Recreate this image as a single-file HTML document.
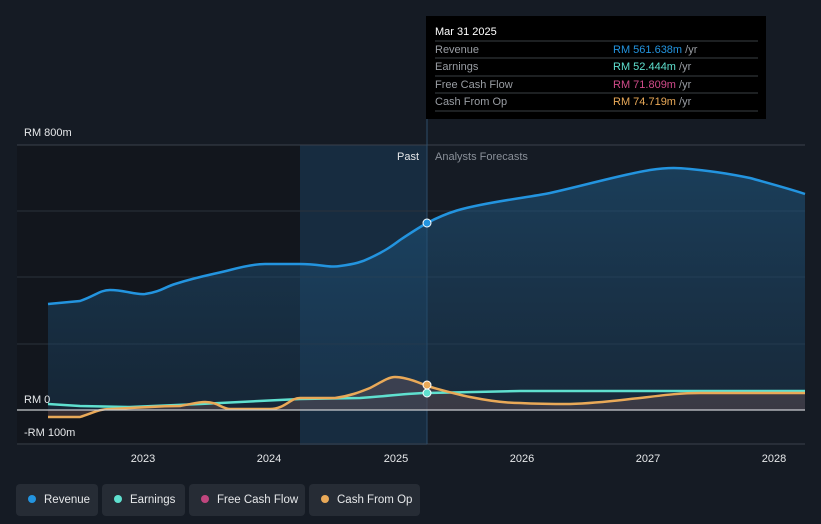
<!DOCTYPE html>
<html><head><meta charset="utf-8"><style>
body{margin:0;width:821px;height:524px;background:#151b24;overflow:hidden;font-family:"Liberation Sans",sans-serif;}
.lg{position:absolute;top:484px;height:32px;background:#262c35;border-radius:4px;color:#e6e8ea;font-size:11.5px;line-height:32px;white-space:nowrap}
.lg i{display:inline-block;width:8px;height:8px;border-radius:50%;margin:0 8px 0 12px;vertical-align:0px}
</style></head><body>
<svg width="821" height="524" style="position:absolute;left:0;top:0" font-family="Liberation Sans, sans-serif">
<defs>
<linearGradient id="rv" x1="0" y1="0" x2="0" y2="1"><stop offset="0" stop-color="#1f5a85" stop-opacity=".55"/><stop offset="1" stop-color="#1b3a55" stop-opacity=".45"/></linearGradient>
</defs>
<rect x="17" y="145" width="283" height="300" fill="#12161d"/>
<rect x="300" y="145" width="127" height="300" fill="#172c40"/>
<g stroke="#2b323c" stroke-width="1">
<line x1="17" y1="145" x2="805" y2="145" stroke="#3a414b"/>
<line x1="17" y1="211" x2="805" y2="211"/>
<line x1="17" y1="277" x2="805" y2="277"/>
<line x1="17" y1="344" x2="805" y2="344"/>
<line x1="17" y1="444" x2="805" y2="444" stroke="#3a414b"/>
</g>
<line x1="427" y1="118" x2="427" y2="444" stroke="#2d4d6a"/>
<path d="M48,304 L80,301 C95,296 100,290 110,290 C125,290 135,295 145,294 C160,292 165,287 175,284 C200,276 215,274 230,270 C245,266 255,264 265,264 L300,264 C320,264 330,268 340,266 C355,264 362,262 370,258 C385,251 392,246 400,240 C412,232 420,227 427,223 C450,211 465,208 480,205 C510,199 530,197 550,193 C590,184 620,175 650,170 C670,167 680,168 690,169 C720,172 735,175 750,178 C775,185 790,189 805,194 L805,410 L48,410 Z" fill="url(#rv)"/>
<path d="M48,304 L80,301 C95,296 100,290 110,290 C125,290 135,295 145,294 C160,292 165,287 175,284 C200,276 215,274 230,270 C245,266 255,264 265,264 L300,264 C320,264 330,268 340,266 C355,264 362,262 370,258 C385,251 392,246 400,240 C412,232 420,227 427,223 C450,211 465,208 480,205 C510,199 530,197 550,193 C590,184 620,175 650,170 C670,167 680,168 690,169 C720,172 735,175 750,178 C775,185 790,189 805,194" fill="none" stroke="#2394df" stroke-width="2.5"/>
<path d="M48,417 L80,417 C95,412 100,409 110,409 L150,407 C165,406 170,406 180,406 C192,404 198,402 205,402 C218,402 222,409 230,409 L270,409 C285,409 290,398 300,398 L335,398 C350,396 360,392 370,388 C380,383 388,377 395,377 C405,377 418,382 427,386 C445,391 455,394 470,397 C490,401 505,403 520,403 C540,404 555,404 570,404 C600,403 620,400 640,398 C665,395 680,393 700,393 L805,393 L805,410 L48,410 Z" fill="#7a5a5a" fill-opacity=".35"/>
<path d="M48,404 L80,406 L130,407 L200,404 L300,399 L360,398 C390,396 410,393 427,393 L520,391 L805,391" fill="none" stroke="#5fe0cf" stroke-width="2.5"/>
<path d="M48,417 L80,417 C95,412 100,409 110,409 L150,407 C165,406 170,406 180,406 C192,404 198,402 205,402 C218,402 222,409 230,409 L270,409 C285,409 290,398 300,398 L335,398 C350,396 360,392 370,388 C380,383 388,377 395,377 C405,377 418,382 427,386 C445,391 455,394 470,397 C490,401 505,403 520,403 C540,404 555,404 570,404 C600,403 620,400 640,398 C665,395 680,393 700,393 L805,393" fill="none" stroke="#e9a958" stroke-width="2.5"/>
<line x1="17" y1="410" x2="805" y2="410" stroke="#c9ccd0" stroke-width="1.2"/>
<circle cx="427" cy="223" r="4" fill="#2394df" stroke="#fff" stroke-width="1"/>
<circle cx="427" cy="393" r="4" fill="#5fe0cf" stroke="#fff" stroke-width="1"/>
<circle cx="427" cy="385" r="4" fill="#e9a958" stroke="#fff" stroke-width="1"/>
<text x="24" y="136" fill="#e6e8ea" font-size="11">RM 800m</text>
<text x="24" y="403" fill="#e6e8ea" font-size="11">RM 0</text>
<text x="24" y="436" fill="#e6e8ea" font-size="11">-RM 100m</text>
<text x="419" y="160" fill="#e6e8ea" font-size="11" text-anchor="end">Past</text>
<text x="435" y="160" fill="#8a9099" font-size="11">Analysts Forecasts</text>
<g fill="#e6e8ea" font-size="11" text-anchor="middle">
<text x="143" y="462">2023</text><text x="269" y="462">2024</text><text x="396" y="462">2025</text>
<text x="522" y="462">2026</text><text x="648" y="462">2027</text><text x="774" y="462">2028</text>
</g>
<rect x="426" y="16" width="340" height="103" fill="#000"/>
<text x="435" y="35" fill="#fff" font-size="11">Mar 31 2025</text>
<g stroke="#3a3f45"><line x1="435" y1="41" x2="758" y2="41"/><line x1="435" y1="58" x2="758" y2="58"/><line x1="435" y1="76" x2="758" y2="76"/><line x1="435" y1="93" x2="758" y2="93"/><line x1="435" y1="111" x2="758" y2="111"/></g>
<g font-size="11" fill="#9a9ea4">
<text x="435" y="53">Revenue</text><text x="435" y="70">Earnings</text><text x="435" y="88">Free Cash Flow</text><text x="435" y="105">Cash From Op</text>
</g>
<text x="613" y="53" font-size="11" fill="#2394df">RM 561.638m <tspan fill="#9a9ea4">/yr</tspan></text>
<text x="613" y="70" font-size="11" fill="#5fe0cf">RM 52.444m <tspan fill="#9a9ea4">/yr</tspan></text>
<text x="613" y="88" font-size="11" fill="#d04b8a">RM 71.809m <tspan fill="#9a9ea4">/yr</tspan></text>
<text x="613" y="105" font-size="11" fill="#e9a958">RM 74.719m <tspan fill="#9a9ea4">/yr</tspan></text>
</svg>
<div class="lg" style="left:16px;width:82px"><i style="background:#2394df"></i>Revenue</div>
<div class="lg" style="left:102px;width:83px"><i style="background:#5fe0cf"></i>Earnings</div>
<div class="lg" style="left:189px;width:116px"><i style="background:#c0467e"></i>Free Cash Flow</div>
<div class="lg" style="left:309px;width:111px"><i style="background:#e9a958"></i>Cash From Op</div>
</body></html>
